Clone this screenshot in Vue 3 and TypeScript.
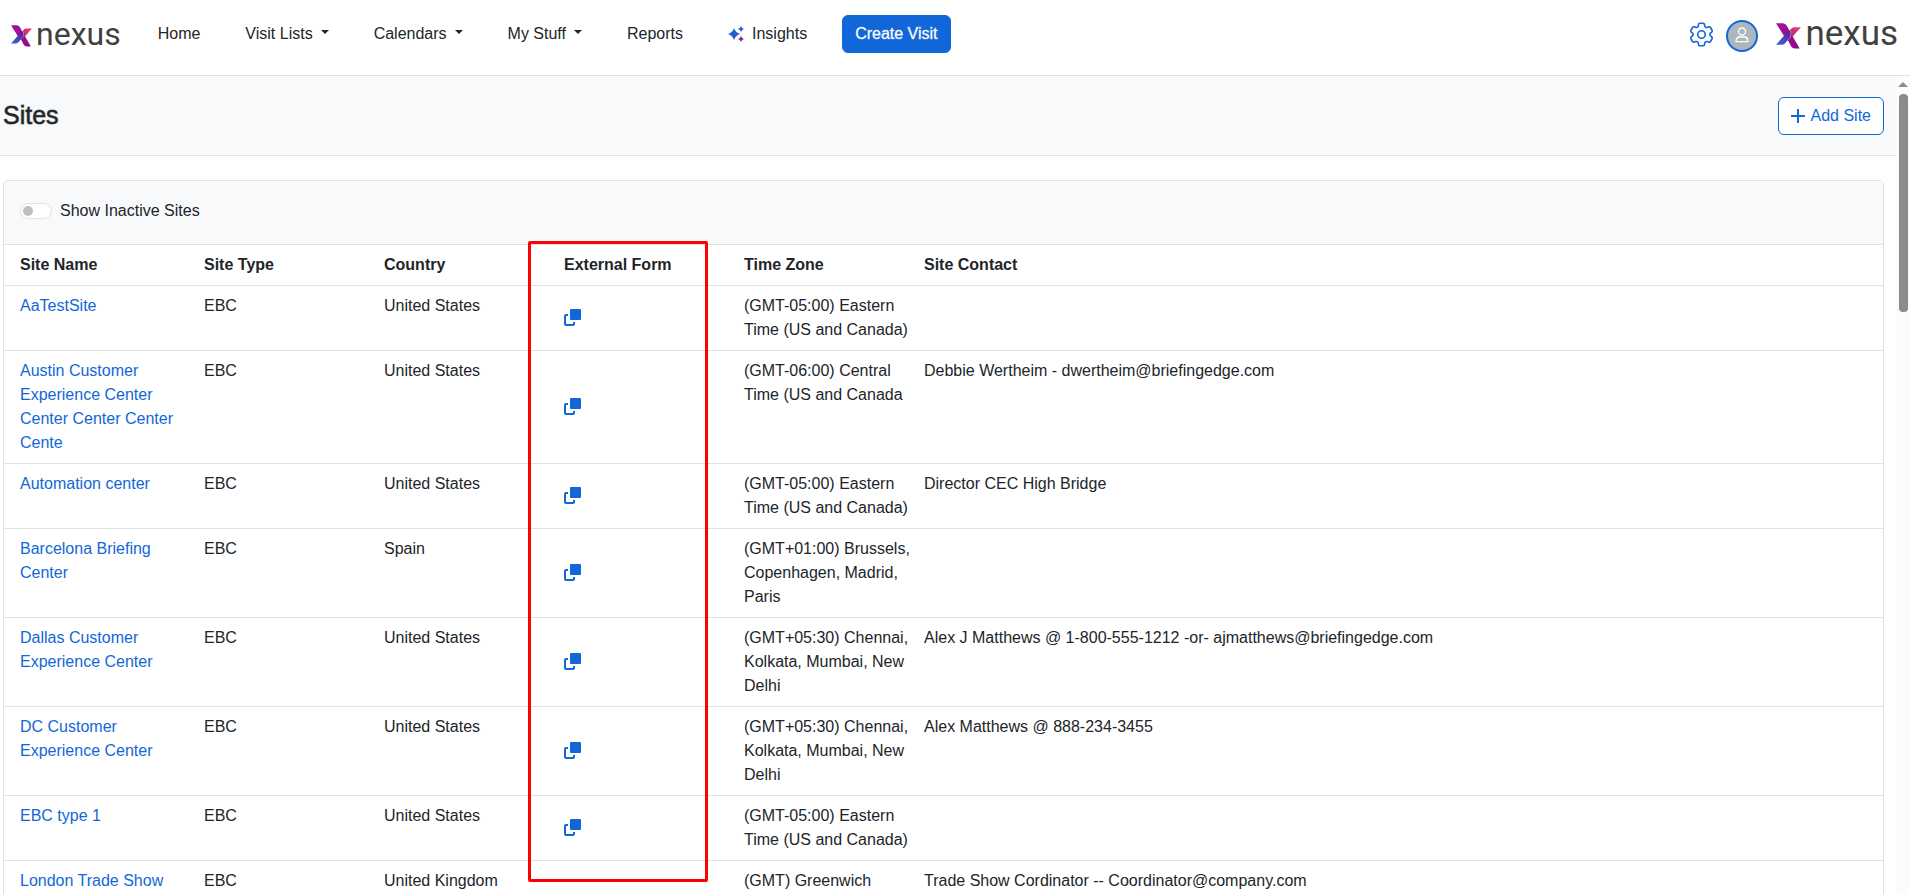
<script setup lang="ts">
import { ref } from 'vue'

interface NavItem {
  label: string
  menu?: boolean
  sparkle?: boolean
}

interface Site {
  name: string
  country: string
  zone: string
  contact: string
}

const navItems: NavItem[] = [
  { label: 'Home' },
  { label: 'Visit Lists', menu: true },
  { label: 'Calendars', menu: true },
  { label: 'My Stuff', menu: true },
  { label: 'Reports' },
  { label: 'Insights', sparkle: true },
]

const columns = ['Site Name', 'Site Type', 'Country', 'External Form', 'Time Zone', 'Site Contact']

const sites: Site[] = [
  { name: 'AaTestSite', country: 'United States', zone: '(GMT-05:00) Eastern Time (US and Canada)', contact: '' },
  { name: 'Austin Customer Experience Center Center Center Center Cente', country: 'United States', zone: '(GMT-06:00) Central Time (US and Canada', contact: 'Debbie Wertheim - dwertheim@briefingedge.com' },
  { name: 'Automation center', country: 'United States', zone: '(GMT-05:00) Eastern Time (US and Canada)', contact: 'Director CEC High Bridge' },
  { name: 'Barcelona Briefing Center', country: 'Spain', zone: '(GMT+01:00) Brussels, Copenhagen, Madrid, Paris', contact: '' },
  { name: 'Dallas Customer Experience Center', country: 'United States', zone: '(GMT+05:30) Chennai, Kolkata, Mumbai, New Delhi', contact: 'Alex J Matthews @ 1-800-555-1212 -or- ajmatthews@briefingedge.com' },
  { name: 'DC Customer Experience Center', country: 'United States', zone: '(GMT+05:30) Chennai, Kolkata, Mumbai, New Delhi', contact: 'Alex Matthews @ 888-234-3455' },
  { name: 'EBC type 1', country: 'United States', zone: '(GMT-05:00) Eastern Time (US and Canada)', contact: '' },
  { name: 'London Trade Show', country: 'United Kingdom', zone: '(GMT) Greenwich', contact: 'Trade Show Cordinator -- Coordinator@company.com' },
]

const showInactive = ref(false)
</script>

<template>
  <div class="app">
    <svg class="defs" aria-hidden="true">
      <defs>
        <linearGradient id="arm-main" x1="0" y1="0" x2="1" y2="1">
          <stop offset="0" stop-color="#a3129a" />
          <stop offset="1" stop-color="#94038c" />
        </linearGradient>
        <linearGradient id="arm-blue" x1="0" y1="1" x2="1" y2="0">
          <stop offset="0" stop-color="#2a6be0" />
          <stop offset="0.5" stop-color="#5040b8" />
          <stop offset="1" stop-color="#5b1c80" />
        </linearGradient>
        <linearGradient id="arm-pink" x1="1" y1="0" x2="0" y2="1">
          <stop offset="0" stop-color="#f0406c" />
          <stop offset="1" stop-color="#9c1690" />
        </linearGradient>
        <linearGradient id="sparkle" gradientUnits="userSpaceOnUse" x1="4" y1="4" x2="15" y2="15">
          <stop offset="0.2" stop-color="#1267d8" />
          <stop offset="0.9" stop-color="#8a1aa0" />
        </linearGradient>
        <symbol id="mark" viewBox="0 0 74 76">
          <path d="M74 12H54Q48 12 44 17L31 34L38 52Z" fill="url(#arm-pink)" />
          <path d="M0 0H20Q28 0 32 8L44 30L70 75H55Q49 75 45 69L33 46L25 40Z" fill="url(#arm-main)" />
          <path d="M0 64L39 20Q48 34 39 46L26 60Q22 64 17 64Z" fill="url(#arm-blue)" />
          <path d="M35 50Q48 40 43 22" fill="none" stroke="#d59ad8" stroke-width="2" />
        </symbol>
        <symbol id="copy" viewBox="0 0 17 17">
          <rect x="6" y="0" width="11" height="11" rx="1" />
          <path d="M4 5H2Q0 5 0 7V15Q0 17 2 17H9Q11 17 11 15V13H9V15H2V7H4Z" />
        </symbol>
      </defs>
    </svg>

    <header class="topbar">
      <a class="brand" href="#" aria-label="nexus">
        <svg class="mark"><use href="#mark" /></svg>
        <span>nexus</span>
      </a>
      <nav class="nav">
        <a v-for="item in navItems" :key="item.label" href="#" class="nav-link">
          <svg v-if="item.sparkle" class="sparkle" viewBox="0 0 16 16" fill="url(#sparkle)">
            <path d="M6 2Q7.400 6.600 12 8Q7.400 9.400 6 14Q4.600 9.400 0 8Q4.600 6.600 6 2Z" />
            <path d="M13 0Q13.700 2.300 16 3Q13.700 3.700 13 6Q12.300 3.700 10 3Q12.300 2.300 13 0Z" />
            <path d="M13 10Q13.700 12.300 16 13Q13.700 13.700 13 16Q12.300 13.700 10 13Q12.300 12.300 13 10Z" />
          </svg>
          <span>{{ item.label }}</span>
          <span v-if="item.menu" class="caret"></span>
        </a>
      </nav>
      <button class="btn primary" type="button">Create Visit</button>
      <div class="account">
        <button class="icon-btn" type="button" aria-label="Settings">
          <svg class="gear" viewBox="2 2 20 20" fill="none" stroke="currentColor" stroke-width="1.3" stroke-linejoin="round">
            <path d="M9.594 3.94c.09-.542.56-.94 1.11-.94h2.593c.55 0 1.02.398 1.11.94l.213 1.281c.063.374.313.686.645.87.074.04.147.083.22.127.325.196.72.257 1.075.124l1.217-.456a1.125 1.125 0 0 1 1.37.49l1.296 2.247a1.125 1.125 0 0 1-.26 1.431l-1.003.827c-.293.241-.438.613-.43.992a7.723 7.723 0 0 1 0 .255c-.008.378.137.75.43.991l1.004.827c.424.35.534.955.26 1.43l-1.298 2.247a1.125 1.125 0 0 1-1.369.491l-1.217-.456c-.355-.133-.75-.072-1.076.124a6.47 6.47 0 0 1-.22.128c-.331.183-.581.495-.644.869l-.213 1.281c-.09.543-.56.94-1.11.94h-2.594c-.55 0-1.019-.398-1.11-.94l-.213-1.281c-.062-.374-.312-.686-.644-.87a6.52 6.52 0 0 1-.22-.127c-.325-.196-.72-.257-1.076-.124l-1.217.456a1.125 1.125 0 0 1-1.369-.49l-1.297-2.247a1.125 1.125 0 0 1 .26-1.431l1.004-.827c.292-.24.437-.613.43-.991a6.932 6.932 0 0 1 0-.255c.007-.38-.138-.751-.43-.992l-1.004-.827a1.125 1.125 0 0 1-.26-1.43l1.297-2.247a1.125 1.125 0 0 1 1.37-.491l1.216.456c.356.133.751.072 1.076-.124.072-.044.146-.086.22-.128.332-.183.582-.495.644-.869l.214-1.28Z" />
            <circle cx="12" cy="12" r="3" />
          </svg>
        </button>
        <button class="avatar" type="button" aria-label="Profile">
          <svg viewBox="0 0 14 16" fill="none" stroke="#fff" stroke-width="1.3">
            <circle cx="7" cy="4.500" r="3.500" />
            <path d="M1 14.700Q1 10 5 10H9Q13 10 13 14.700Z" stroke-linejoin="round" />
          </svg>
        </button>
        <a class="brand large" href="#" aria-label="nexus">
          <svg class="mark"><use href="#mark" /></svg>
          <span>nexus</span>
        </a>
      </div>
    </header>

    <div class="body">
      <main class="content">
        <div class="title-bar">
          <h1>Sites</h1>
          <button class="btn outline" type="button">
            <svg class="plus" viewBox="0 0 14 14" stroke="currentColor" stroke-width="2"><path d="M7 0V14M0 7H14" /></svg>
            Add Site
          </button>
        </div>

        <section class="card">
          <div class="card-head">
            <input id="inactive" v-model="showInactive" class="switch" type="checkbox" role="switch" />
            <label for="inactive">Show Inactive Sites</label>
          </div>
          <table>
            <colgroup>
              <col class="col-name" />
              <col v-for="n in 4" :key="n" class="col-mid" />
              <col />
            </colgroup>
            <thead>
              <tr>
                <th v-for="c in columns" :key="c" scope="col">{{ c }}</th>
              </tr>
            </thead>
            <tbody>
              <tr v-for="s in sites" :key="s.name">
                <td><a href="#">{{ s.name }}</a></td>
                <td>EBC</td>
                <td>{{ s.country }}</td>
                <td class="form-cell">
                  <button class="icon-btn" type="button" :aria-label="'Copy form link for ' + s.name">
                    <svg class="copy" fill="currentColor"><use href="#copy" /></svg>
                  </button>
                </td>
                <td class="zone-cell">{{ s.zone }}</td>
                <td>{{ s.contact }}</td>
              </tr>
            </tbody>
          </table>
          <div class="highlight"></div>
        </section>
      </main>
      <div class="scrollbar" aria-hidden="true">
        <div class="arrow"></div>
        <div class="thumb"></div>
      </div>
    </div>
  </div>
</template>

<style>
body {
  margin: 0;
  background: #fff;
}
</style>

<style scoped>
* {
  box-sizing: border-box;
}
.app {
  display: flex;
  flex-direction: column;
  height: 100vh;
  overflow: hidden;
  font: 16px/24px "Liberation Sans", Arial, sans-serif;
  color: #212529;
}
.defs {
  position: absolute;
  width: 0;
  height: 0;
}
a {
  color: #1267d8;
  text-decoration: none;
}
button {
  font: inherit;
  cursor: pointer;
}
.topbar {
  display: flex;
  flex: none;
  align-items: center;
  height: 76px;
  padding: 0 12px 8px 11px;
  border-bottom: 1px solid #dee2e6;
}
.brand {
  display: flex;
  align-items: center;
  gap: 4px;
  font: 32px/32px Roboto, sans-serif;
  color: #414141;
}
.brand .mark {
  width: 21px;
  height: 22px;
  margin-top: 4px;
}
.brand.large {
  gap: 4px;
  font-size: 35px;
}
.brand.large .mark {
  width: 25px;
  height: 26px;
}
.nav {
  display: flex;
  gap: 45px;
  margin: 0 35px 0 37px;
}
.nav-link {
  display: flex;
  align-items: center;
  gap: 8px;
  color: #212529;
}
.caret {
  margin-bottom: 3px;
  border: 4px solid transparent;
  border-top-color: #212529;
  border-bottom: 0;
}
.sparkle {
  width: 16px;
  height: 16px;
}
.btn {
  display: flex;
  align-items: center;
  height: 38px;
  border: 1px solid #1267d8;
  border-radius: 6px;
  padding: 0 12px;
}
.btn.primary {
  background: #1267d8;
  color: #fff;
  -webkit-text-stroke: 1px rgba(255, 255, 255, 0.3);
}
.btn.outline {
  gap: 6px;
  background: #fff;
  color: #1267d8;
}
.plus {
  width: 14px;
  height: 14px;
}
.account {
  display: flex;
  align-items: center;
  gap: 12px;
  margin-left: auto;
}
.icon-btn {
  display: block;
  padding: 0;
  border: 0;
  background: none;
  color: #1267d8;
}
.gear {
  display: block;
  width: 25px;
  height: 25px;
  margin-top: 2px;
}
.avatar {
  display: flex;
  align-items: center;
  justify-content: center;
  width: 32px;
  height: 32px;
  margin: 4px 6px 0 0;
  padding: 0;
  border: 2px solid #1267d8;
  border-radius: 50%;
  background: #adb5bd;
}
.avatar svg {
  width: 14px;
  height: 16px;
  margin-bottom: 2px;
}
.body {
  display: flex;
  flex: 1;
  min-height: 0;
}
.content {
  flex: 1;
  min-width: 0;
  overflow: hidden;
}
.title-bar {
  display: flex;
  align-items: center;
  justify-content: space-between;
  height: 80px;
  padding: 0 12px 0 3px;
  border-bottom: 1px solid #dee2e6;
  background: #f8f9fb;
}
h1 {
  margin: 0;
  padding-bottom: 2px;
  font-size: 25px;
  line-height: 28px;
  font-weight: 400;
  -webkit-text-stroke: 1px rgba(33, 37, 41, 0.6);
}
.card {
  position: relative;
  margin: 24px 12px 0 3px;
  border: 1px solid #dee2e6;
  border-radius: 4px;
}
.card-head {
  display: flex;
  align-items: center;
  gap: 8px;
  height: 64px;
  padding: 0 16px 4px;
  border-bottom: 1px solid #dee2e6;
  background: #f8f9fb;
}
.switch {
  display: flex;
  align-items: center;
  appearance: none;
  width: 32px;
  height: 16px;
  margin: 0;
  padding: 0 2px;
  border: 1px solid #dee2e6;
  border-radius: 8px;
  background: #fff;
}
.switch::before {
  content: "";
  width: 10px;
  height: 10px;
  border-radius: 50%;
  background: #bfbfbf;
}
.switch:checked {
  justify-content: flex-end;
}
table {
  width: 100%;
  table-layout: fixed;
  border-collapse: separate;
  border-spacing: 0;
}
.col-name {
  width: 192px;
}
.col-mid {
  width: 180px;
}
th,
td {
  padding: 8px;
  border-bottom: 1px solid #dee2e6;
  text-align: left;
  vertical-align: top;
}
th:first-child,
td:first-child {
  padding-left: 16px;
}
.form-cell {
  vertical-align: middle;
}
.form-cell .icon-btn {
  margin-bottom: 2px;
}
.zone-cell {
  padding-right: 0;
}
tbody tr:last-child td {
  height: 89px;
}
.copy {
  display: block;
  width: 17px;
  height: 17px;
}
.highlight {
  position: absolute;
  top: 60px;
  left: 524px;
  width: 180px;
  height: 641px;
  border: 3px solid #f00;
  border-radius: 2px;
  pointer-events: none;
}
.scrollbar {
  display: flex;
  flex-direction: column;
  align-items: center;
  gap: 7px;
  width: 14px;
  padding-top: 6px;
  background: #fcfcfc;
}
.arrow {
  border: 5px solid transparent;
  border-top: 0;
  border-bottom-color: #8b8b8b;
}
.thumb {
  width: 9px;
  height: 218px;
  border-radius: 4px;
  background: #8b8b8b;
}
</style>
